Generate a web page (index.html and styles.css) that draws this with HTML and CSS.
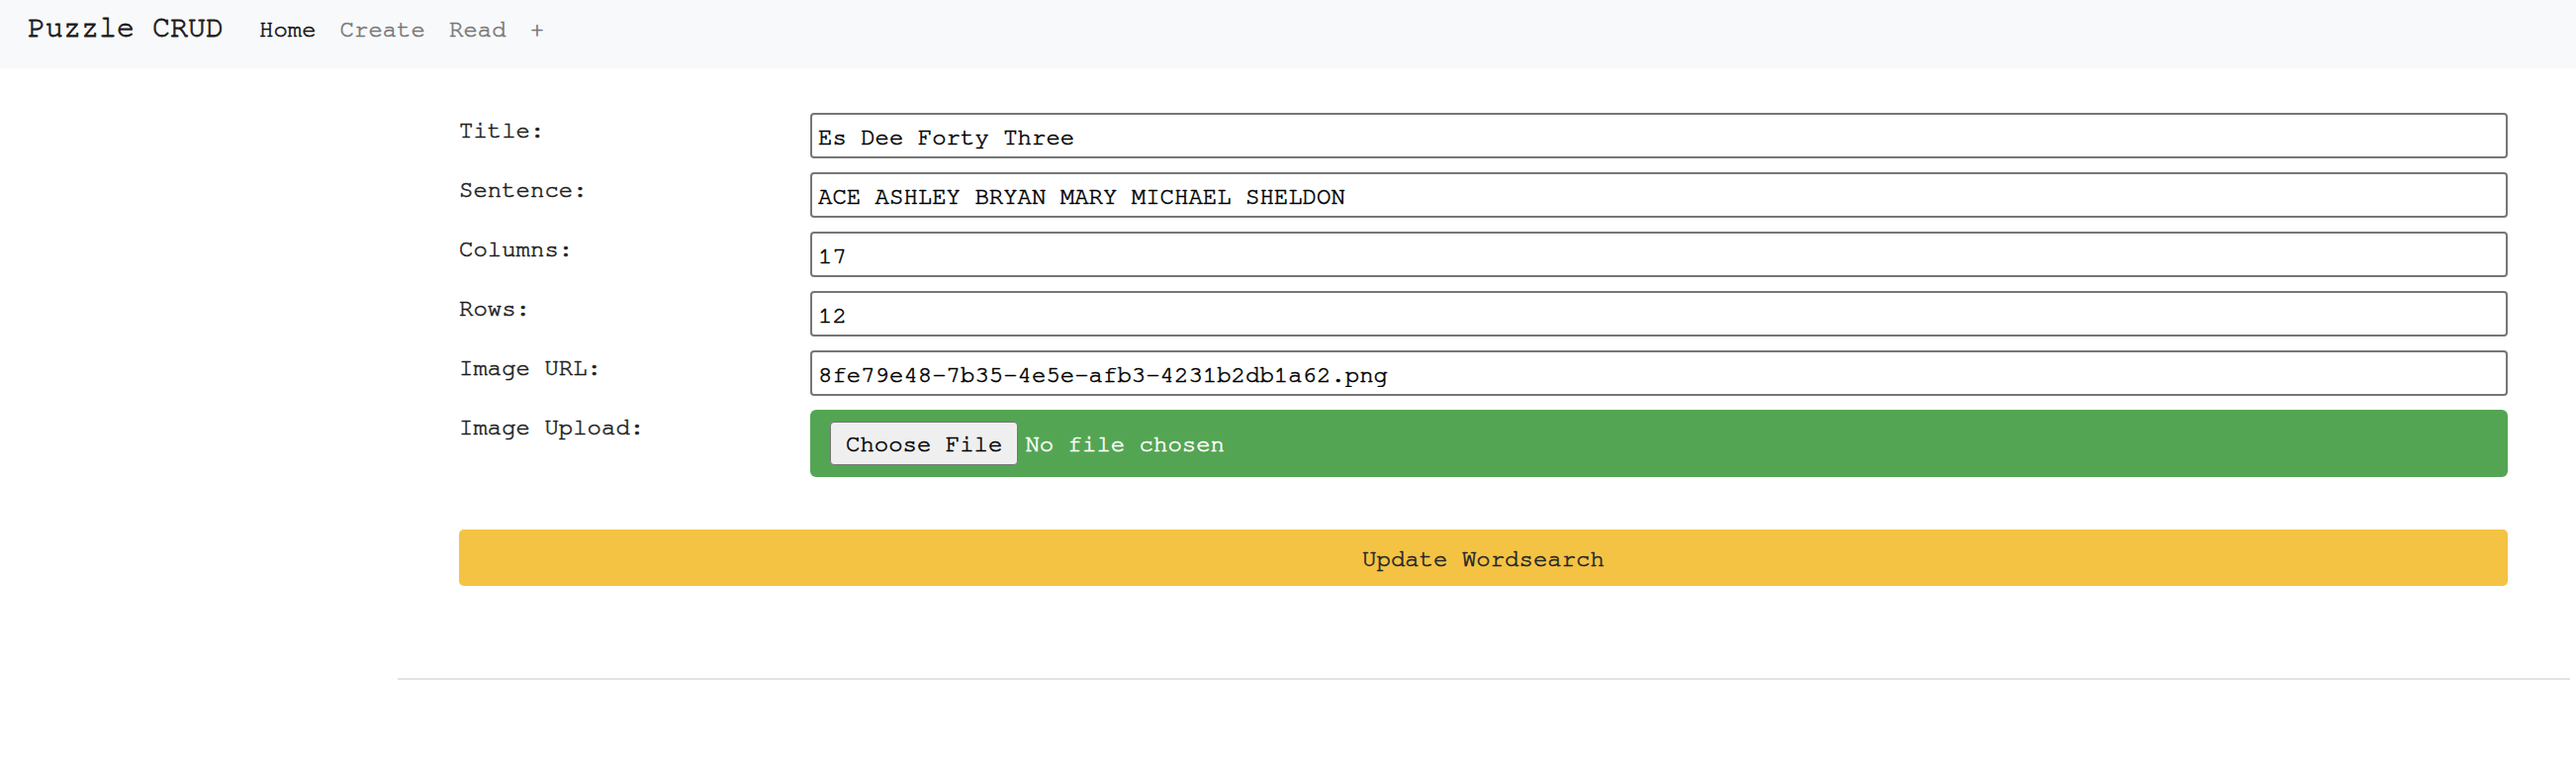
FILE: index.html
```html
<!DOCTYPE html>
<html lang="en">
<head>
<meta charset="utf-8">
<title>Puzzle CRUD</title>
<link rel="stylesheet" href="styles.css">
</head>
<body>
<nav class="navbar">
  <a class="brand" href="#">Puzzle CRUD</a>
  <a class="nav-link active" href="#">Home</a>
  <a class="nav-link" href="#">Create</a>
  <a class="nav-link" href="#">Read</a>
  <a class="nav-link" href="#">+</a>
</nav>
<main class="main">
  <form class="form">
    <div class="fields">
      <label class="label" for="title">Title:</label>
      <input class="input" id="title" type="text" value="Es Dee Forty Three">
      <label class="label" for="sentence">Sentence:</label>
      <input class="input" id="sentence" type="text" value="ACE ASHLEY BRYAN MARY MICHAEL SHELDON">
      <label class="label" for="columns">Columns:</label>
      <input class="input" id="columns" type="text" value="17">
      <label class="label" for="rows">Rows:</label>
      <input class="input" id="rows" type="text" value="12">
      <label class="label" for="url">Image URL:</label>
      <input class="input" id="url" type="text" value="8fe79e48-7b35-4e5e-afb3-4231b2db1a62.png">
      <span class="label">Image Upload:</span>
      <div class="file-box">
        <span class="file-btn">Choose File</span>
        <span class="file-name">No file chosen</span>
      </div>
    </div>
    <button class="submit" type="button">Update Wordsearch</button>
  </form>
  <hr class="rule">
</main>
</body>
</html>
```
FILE: styles.css
```css
html, body {
  margin: 0;
  padding: 0;
  background: #ffffff;
  font-family: "Nimbus Mono PS", "FreeMono", "Liberation Mono", "Courier New", monospace;
  color: #212529;
  -webkit-text-stroke: 0.6px currentColor;
}

.navbar {
  box-sizing: border-box;
  height: 69px;
  background: #f8f9fa;
  display: flex;
  align-items: baseline;
  padding: 6px 28px 0;
}

.brand {
  font-size: 30px;
  line-height: 45px;
  color: #1a1a1a;
  text-decoration: none;
  margin-right: 24px;
  -webkit-text-stroke: 0.8px #1a1a1a;
}

.nav-link {
  font-size: 24px;
  line-height: 36px;
  padding: 0 12px;
  color: #777777;
  text-decoration: none;
}

.nav-link.active {
  color: #111111;
}

.main {
  margin-left: 402px;
  margin-right: 6px;
}

.form {
  padding: 45px 63px 0 62px;
}

.fields {
  display: grid;
  grid-template-columns: 355px 1fr;
  row-gap: 14px;
}

.label {
  font-size: 24px;
  line-height: 36px;
  padding-left: 0;
  color: #1e1e1e;
}

.input {
  box-sizing: border-box;
  height: 46px;
  width: 100%;
  margin: 0;
  border: 2px solid #767676;
  border-radius: 4px;
  padding: 3px 6px 0;
  font-family: inherit;
  font-size: 24px;
  color: #000000;
  background: #ffffff;
  -webkit-text-stroke: 0.6px #000000;
}

.file-box {
  box-sizing: border-box;
  height: 68px;
  background: #54a553;
  border-radius: 6px;
  display: flex;
  align-items: center;
  padding: 0 20px;
}

.file-btn {
  box-sizing: border-box;
  height: 44px;
  display: flex;
  align-items: center;
  padding: 2px 15px 0;
  background: #efefef;
  border: 1.5px solid #767676;
  border-radius: 4px;
  font-size: 24px;
  color: #000000;
}

.file-name {
  margin-left: 7px;
  padding-top: 2px;
  font-size: 24px;
  color: #ffffff;
}

.submit {
  display: block;
  width: 100%;
  height: 57px;
  margin-top: 53px;
  padding: 3px 0 0;
  border: none;
  border-radius: 5px;
  background: #f5c344;
  font-family: inherit;
  font-size: 24px;
  color: #212529;
  -webkit-text-stroke: 0.6px #212529;
}

.rule {
  margin: 93px 0 0;
  border: none;
  height: 2px;
  background: #e2e2e2;
}
```
